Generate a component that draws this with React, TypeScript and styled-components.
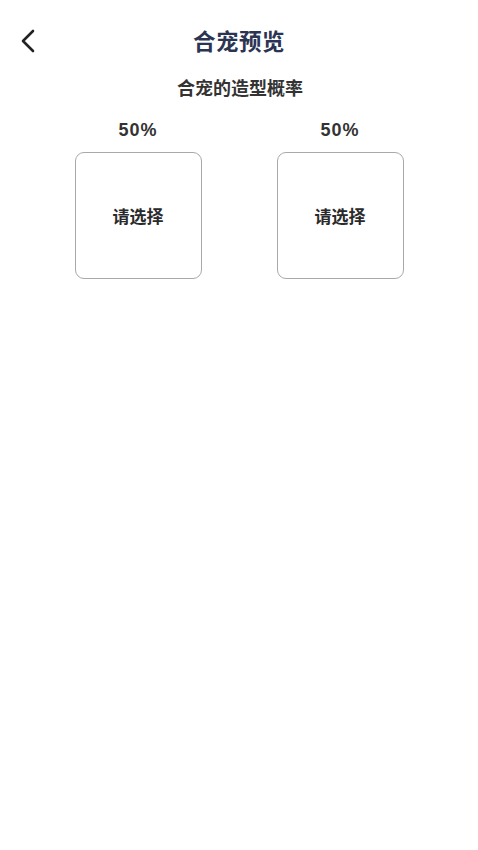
import * as React from 'react';
import styled, { createGlobalStyle } from 'styled-components';

const GlobalStyle = createGlobalStyle`
  html, body {
    margin: 0;
    padding: 0;
    background: #ffffff;
  }
  body {
    font-family: 'Noto Sans CJK SC', 'Noto Sans', sans-serif;
  }
`;

const Page = styled.div`
  width: 478px;
  min-height: 850px;
  background: #ffffff;
  display: flex;
  flex-direction: column;
`;

const NavBar = styled.header`
  position: relative;
  height: 78px;
  display: flex;
  align-items: flex-start;
  justify-content: center;
`;

const BackButton = styled.button`
  position: absolute;
  left: 14px;
  top: 26px;
  width: 28px;
  height: 30px;
  padding: 0;
  border: none;
  background: none;
  display: flex;
  align-items: center;
  justify-content: center;
  cursor: pointer;
`;

const Title = styled.h1`
  margin: 29px 0 0;
  font-size: 22.5px;
  font-weight: 700;
  color: #2b3553;
  letter-spacing: 0.5px;
  line-height: 1;
`;

const Subtitle = styled.h2`
  margin: 0;
  text-align: center;
  font-size: 18px;
  font-weight: 700;
  color: #333333;
  line-height: 1;
  padding-left: 2px;
`;

const Options = styled.div`
  display: flex;
  justify-content: center;
  gap: 75px;
  margin-top: 24px;
`;

const Option = styled.div`
  display: flex;
  flex-direction: column;
  align-items: center;
  gap: 12px;
`;

const Percent = styled.span`
  font-family: 'Liberation Sans', Arial, sans-serif;
  font-size: 18px;
  font-weight: 700;
  color: #333333;
  letter-spacing: 1px;
  line-height: 20px;
`;

const PickBox = styled.button`
  width: 127px;
  height: 127px;
  box-sizing: border-box;
  border: 1px solid #a9a9a9;
  border-radius: 9px;
  background: #ffffff;
  display: flex;
  align-items: center;
  justify-content: center;
  font-family: 'Noto Sans CJK SC', sans-serif;
  font-size: 17px;
  font-weight: 700;
  color: #2a2a2a;
  cursor: pointer;
  padding: 0;
`;

const options = [
  { id: 1, rate: '50%' },
  { id: 2, rate: '50%' },
];

export default function App() {
  return (
    <Page>
      <GlobalStyle />
      <NavBar>
        <BackButton aria-label="返回">
          <svg width="16" height="24" viewBox="0 0 16 24">
            <path d="M13 2 L3 12 L13 22" fill="none" stroke="#222" strokeWidth="2.6" strokeLinecap="round" strokeLinejoin="round" />
          </svg>
        </BackButton>
        <Title>合宠预览</Title>
      </NavBar>
      <Subtitle>合宠的造型概率</Subtitle>
      <Options>
        {options.map((o) => (
          <Option key={o.id}>
            <Percent>{o.rate}</Percent>
            <PickBox>请选择</PickBox>
          </Option>
        ))}
      </Options>
    </Page>
  );
}
